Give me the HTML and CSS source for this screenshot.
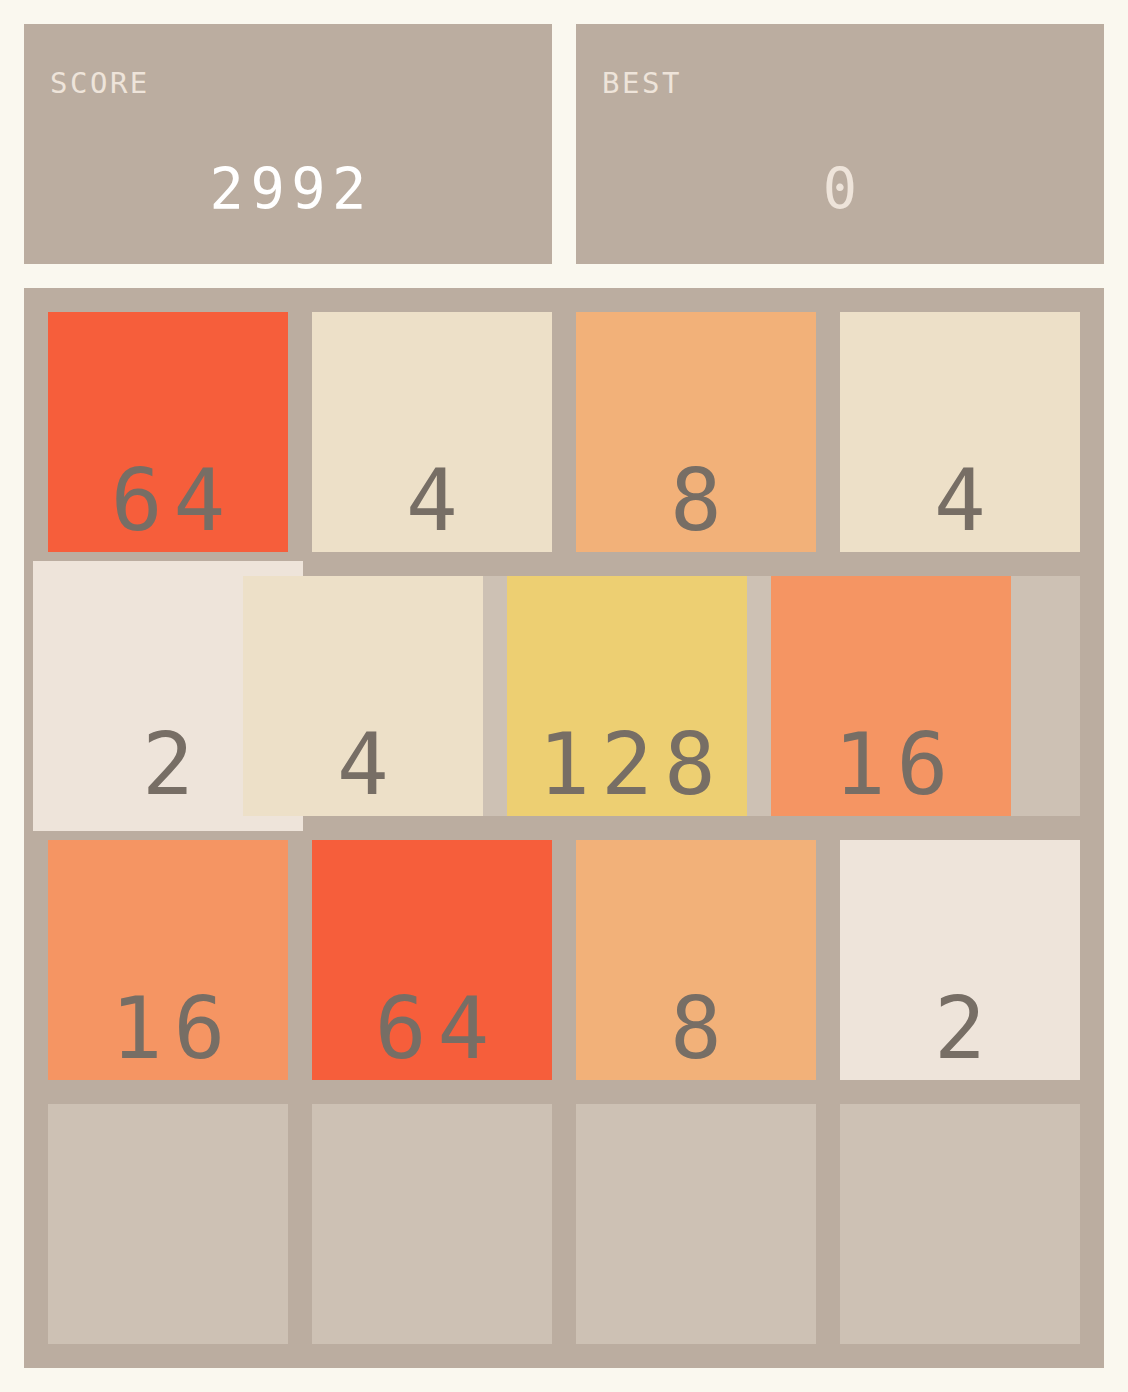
FILE: index.html
```html
<!DOCTYPE html>
<html lang="en">
<head>
  <meta charset="UTF-8">
  <meta name="viewport" content="width=device-width, initial-scale=1.0">
  <title>2048</title>
  <link rel="stylesheet" href="styles.css">
</head>
<body>
  <div class="scores">
    <div class="score-box">
      <div class="label">SCORE</div>
      <div class="value">2992</div>
    </div>
    <div class="score-box best">
      <div class="label">BEST</div>
      <div class="value">0</div>
    </div>
  </div>

  <div class="board">
    <!-- empty slots -->
    <div class="cells">
      <div></div><div></div><div></div><div></div>
      <div></div><div></div><div></div><div></div>
      <div></div><div></div><div></div><div></div>
      <div></div><div></div><div></div><div></div>
    </div>

    <!-- tiles sit on the same grid, on top of the slots -->
    <div class="tiles">
      <div class="tile t64 row-1 col-1">64</div>
      <div class="tile t4 row-1 col-2">4</div>
      <div class="tile t8 row-1 col-3">8</div>
      <div class="tile t4 row-1 col-4">4</div>

      <div class="tile t2 row-2 col-1 merged">2</div>
      <div class="tile t4 row-2 col-2 sliding">4</div>
      <div class="tile t128 row-2 col-3 sliding">128</div>
      <div class="tile t16 row-2 col-4 sliding">16</div>

      <div class="tile t16 row-3 col-1">16</div>
      <div class="tile t64 row-3 col-2">64</div>
      <div class="tile t8 row-3 col-3">8</div>
      <div class="tile t2 row-3 col-4">2</div>
    </div>
  </div>
</body>
</html>
```

FILE: styles.css
```css
body {
  margin: 0;
  padding: 24px;
  background: #faf8ef;
  font-family: "DejaVu Sans Mono", "Liberation Mono", monospace;
}

.scores {
  display: grid;
  grid-template-columns: 528px 528px;
  gap: 24px;
  margin-bottom: 24px;
}

.score-box {
  height: 240px;
  box-sizing: border-box;
  padding: 45px 0 0 26px;
  background: #bbada0;
}

.score-box .label {
  font-size: 29px;
  line-height: 1;
  letter-spacing: 2.5px;
  color: #eee4da;
}

.score-box .value {
  margin-top: 63px;
  margin-left: -26px;
  font-size: 57px;
  line-height: 1;
  letter-spacing: 6.5px;
  text-indent: 6.5px;
  text-align: center;
  color: #fff;
}

.score-box.best .value {
  color: #eee4da;
}

.board {
  position: relative;
  width: 1080px;
  padding: 24px;
  box-sizing: border-box;
  background: #bbada0;
}

.cells,
.tiles {
  display: grid;
  grid-template-columns: repeat(4, 240px);
  grid-template-rows: repeat(4, 240px);
  gap: 24px;
}

.cells div {
  background: #cdc1b4;
}

.tiles {
  position: absolute;
  top: 24px;
  left: 24px;
}

.tile {
  display: flex;
  align-items: flex-end;
  justify-content: center;
  padding-bottom: 9px;
  box-sizing: border-box;
  font-size: 86px;
  line-height: 1;
  letter-spacing: 11px;
  text-indent: 11px;
  color: #776e65;
}

.row-1 { grid-row: 1; }
.row-2 { grid-row: 2; }
.row-3 { grid-row: 3; }
.row-4 { grid-row: 4; }
.col-1 { grid-column: 1; }
.col-2 { grid-column: 2; }
.col-3 { grid-column: 3; }
.col-4 { grid-column: 4; }

/* move + merge frames */
.tile.sliding {
  transform: translateX(-69px);
}

.tile.merged {
  margin: -15px;
  padding-bottom: 24px;
}

.t2 { background: #eee4da; }
.t4 { background: #ede0c8; }
.t8 { background: #f2b179; }
.t16 { background: #f59563; }
.t64 { background: #f65e3b; }
.t128 { background: #edcf72; }
```
